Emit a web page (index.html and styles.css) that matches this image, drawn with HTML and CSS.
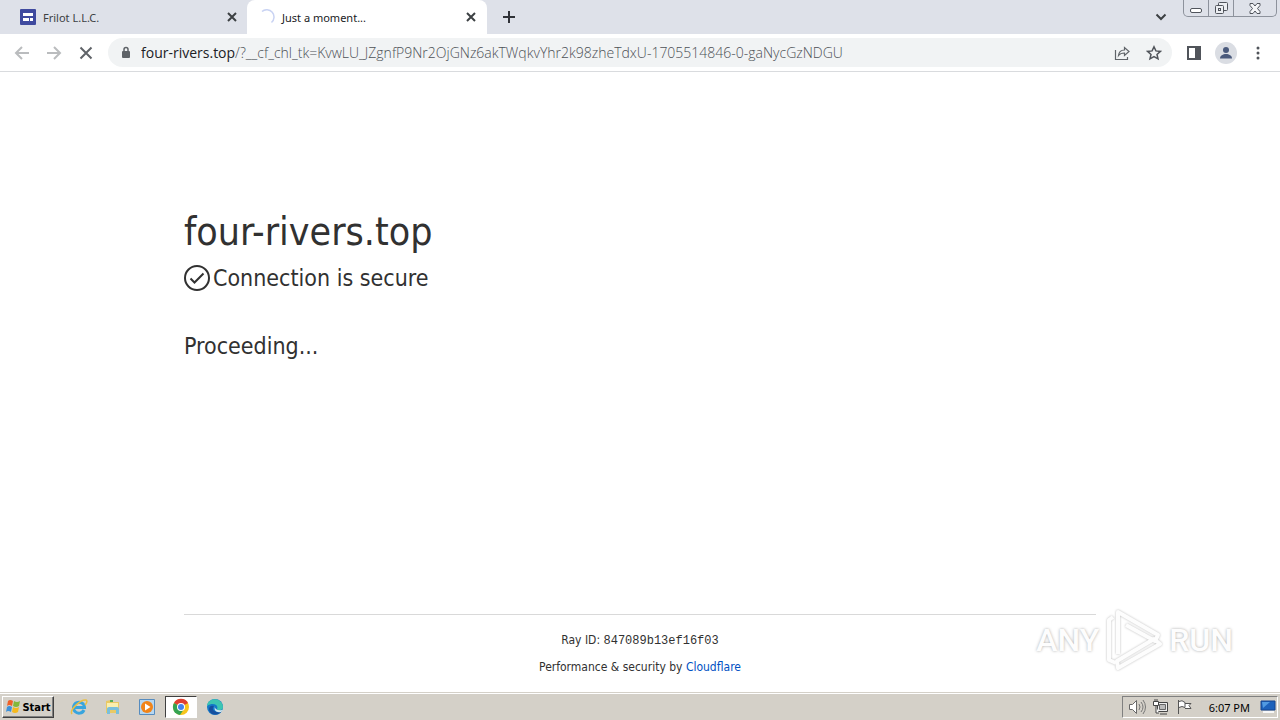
FILE: index.html
```html
<!DOCTYPE html>
<html lang="en">
<head>
<meta charset="utf-8">
<title>Just a moment...</title>
<link rel="stylesheet" href="styles.css">
</head>
<body>
<div class="desktop">
  <header class="tabstrip">
    <div class="tab">
      <svg class="tab-icon" viewBox="0 0 16 16"><rect width="16" height="16" rx="1" fill="#3f4a9f"/><path d="M3 4h10v3H3zM3 9h6v3H3zM10 9h3v3h-3z" fill="#fff"/></svg>
      <span class="tab-title">Frilot L.L.C.</span>
      <button class="tab-close" aria-label="Close tab"><svg width="10" height="10" viewBox="0 0 10 10"><path d="M1 1l8 8M9 1L1 9" stroke="#3c4043" stroke-width="2"/></svg></button>
    </div>
    <div class="tab tab-active">
      <svg class="tab-icon" viewBox="0 0 16 16"><path d="M3 2.500A7 7 0 1 1 12.500 13.500" fill="none" stroke="#c9d3f3" stroke-width="1.500"/></svg>
      <span class="tab-title">Just a moment...</span>
      <button class="tab-close" aria-label="Close tab"><svg width="10" height="10" viewBox="0 0 10 10"><path d="M1 1l8 8M9 1L1 9" stroke="#3c4043" stroke-width="2"/></svg></button>
    </div>
    <button class="new-tab" aria-label="New tab"><svg width="12" height="12" viewBox="0 0 12 12"><path d="M6 0v12M0 6h12" stroke="#303238" stroke-width="2"/></svg></button>
    <button class="tab-search" aria-label="Search tabs"><svg width="12" height="8" viewBox="0 0 12 8"><path d="M1.500 1.500L6 6l4.500-4.500" fill="none" stroke="#3c4043" stroke-width="2"/></svg></button>
    <div class="window-controls">
      <button class="win-button" aria-label="Minimize"><svg width="12" height="14" viewBox="0 0 12 14"><rect x=".5" y="7.500" width="11" height="4" rx="1.500" fill="#fff" stroke="#50545c"/></svg></button>
      <button class="win-button" aria-label="Restore"><svg width="14" height="14" viewBox="0 0 14 14"><g fill="#eceef2" stroke="#50545c"><rect x="4.500" y="1.500" width="9" height="8" rx="1"/><rect x="1.500" y="4.500" width="8" height="8" rx="1"/><rect x="4.500" y="7.500" width="2" height="2"/></g></svg></button>
      <button class="win-button win-close" aria-label="Close"><svg width="14" height="14" viewBox="0 0 14 14"><path d="M2 2.500h3l2 2.500 2-2.500h3v2L9.500 7.500 12 10.500v2H9L7 10l-2 2.500H2v-2l2.500-3L2 4.500z" fill="#f4f5f8" stroke="#50545c"/></svg></button>
    </div>
  </header>

  <nav class="toolbar">
    <button class="nav-button" aria-label="Back"><svg width="16" height="16" viewBox="0 0 16 16"><path d="M15 8H2M8 2L2 8l6 6" fill="none" stroke="#babcbe" stroke-width="2"/></svg></button>
    <button class="nav-button" aria-label="Forward"><svg width="16" height="16" viewBox="0 0 16 16"><path d="M1 8h13M8 2l6 6-6 6" fill="none" stroke="#babcbe" stroke-width="2"/></svg></button>
    <button class="nav-button" aria-label="Stop"><svg width="16" height="16" viewBox="0 0 16 16"><path d="M2.500 2.500l11 11M13.500 2.500l-11 11" stroke="#5f6368" stroke-width="2"/></svg></button>
    <div class="omnibox">
      <svg width="10" height="14" viewBox="0 0 10 14"><rect x="1" y="5" width="8" height="7" rx="1" fill="#5f6368"/><path d="M3 6V3.500a2 2 0 0 1 4 0V6" fill="none" stroke="#5f6368" stroke-width="1.500"/></svg>
      <div class="url"><span class="url-host">four-rivers.top</span>/?__cf_chl_tk=KvwLU_JZgnfP9Nr2OjGNz6akTWqkvYhr2k98zheTdxU-1705514846-0-gaNycGzNDGU</div>
      <button class="icon-button" aria-label="Share"><svg width="16" height="16" viewBox="0 0 16 16"><path d="M1.500 5v9.500h12V12M4.500 10.500c.4-3.500 2.500-5.500 6-5.500V2.500L15 6.500l-4.500 4V8c-2.500 0-4.500.5-6 2.500z" fill="none" stroke="#5f6368" stroke-width="1.200"/></svg></button>
      <button class="icon-button" aria-label="Bookmark"><svg width="16" height="16" viewBox="0 0 16 16"><path d="M8 1.800l1.900 4.100 4.500.5L11 9.400l1 4.400-4-2.300-4 2.300 1-4.400-3.400-3 4.500-.5z" fill="none" stroke="#50545a" stroke-width="1.500"/></svg></button>
    </div>
    <button class="nav-button" aria-label="Side panel"><svg width="14" height="14" viewBox="0 0 14 14"><path d="M1 1h12v12H1z" fill="none" stroke="#50545a" stroke-width="2"/><path d="M8 1h5v12H8z" fill="#50545a"/></svg></button>
    <button class="nav-button" aria-label="Profile"><svg width="22" height="22" viewBox="0 0 22 22"><circle cx="11" cy="11" r="11" fill="#dadde3"/><circle cx="11" cy="8" r="3" fill="#4a5a7c"/><path d="M5 16.500c0-6 12-6 12 0z" fill="#4a5a7c"/></svg></button>
    <button class="nav-button" aria-label="Menu"><svg width="4" height="14" viewBox="0 0 4 14"><g fill="#50545a"><circle cx="2" cy="2" r="1.500"/><circle cx="2" cy="7" r="1.500"/><circle cx="2" cy="12" r="1.500"/></g></svg></button>
  </nav>

  <div class="page">
    <main class="content">
      <h1 class="site">four-rivers.top</h1>
      <h2 class="status"><svg width="26" height="26" viewBox="0 0 26 26"><g fill="none" stroke="#313131" stroke-width="2"><circle cx="13" cy="13" r="12"/><path d="M6.500 13.500l4 4 9-9"/></g></svg>Connection is secure</h2>
      <p class="message">Proceeding...</p>
    </main>
    <footer class="footer">
      <div class="footer-inner">
        <div>Ray ID: <code class="ray">847089b13ef16f03</code></div>
        <div>Performance &amp; security by <a class="link" href="#">Cloudflare</a></div>
      </div>
    </footer>
    <div class="watermark">
      <span>ANY</span>
      <svg class="watermark-mark" width="60" height="64" viewBox="0 0 60 64"><g fill="none" stroke="#fdfdfd" stroke-width="4" stroke-linejoin="round"><path d="M9 9L5 12v40l7 3"/><path d="M14 46V4l40 23-3 6-29-16"/><path d="M13 53l37-22 6 5-42 24z"/></g></svg>
      <span>RUN</span>
    </div>
  </div>

  <footer class="taskbar">
    <button class="start"><svg width="16" height="16" viewBox="0 0 16 16"><path d="M3 2q2-2 5 0L7 7Q4 5 2 7z" fill="#ef6128"/><path d="M9 2q3 2 6 0l-1 5q-3 2-6 0z" fill="#83b83b"/><path d="M2 8q2-2 5 0l-1 5q-3-2-5 0z" fill="#3c91da"/><path d="M8 8q3 2 6 0l-1 5q-3 2-6 0z" fill="#f5b91e"/></svg>Start</button>
    <div class="launchers">
      <button class="launcher" aria-label="Internet Explorer"><svg width="18" height="18" viewBox="0 0 18 18"><path d="M14 12a5.500 5.500 0 1 1 .5-2.500H5" fill="none" stroke="#38a5de" stroke-width="3"/><path d="M2 16C-1 12 11 1 16 2c2 1 0 4-1 5" fill="none" stroke="#eabf43" stroke-width="1.500"/></svg></button>
      <button class="launcher" aria-label="File Explorer"><svg width="18" height="18" viewBox="0 0 18 18"><path d="M2 3l5-1 1 2h7v11H2z" fill="#e9c964"/><path d="M3 5h11v5H3z" fill="#faefae"/><path d="M3 16v-5q0-2 2-2h8q2 0 2 2v5h-3v-4H6v4z" fill="#79bfdc"/><path d="M6 3h3" stroke="#56ad59" stroke-width="2"/></svg></button>
      <button class="launcher" aria-label="Media Player"><svg width="18" height="18" viewBox="0 0 18 18"><path d="M1.500 1.500h15v15h-15z" fill="#b6d7f1" stroke="#568cbf"/><circle cx="9" cy="9" r="6" fill="#f18419"/><path d="M7 5.500v7L12.500 9z" fill="#fff"/></svg></button>
      <button class="launcher launcher-active" aria-label="Chrome"><svg width="18" height="18" viewBox="0 0 18 18"><circle cx="9" cy="9" r="8" fill="#f7c51c"/><path d="M9 9L2 5a8 8 0 0 1 14 0z" fill="#df3f32"/><path d="M9 9L2 5a8 8 0 0 0 6 12l4-6z" fill="#35a352"/><circle cx="9" cy="9" r="4" fill="#fff"/><circle cx="9" cy="9" r="3" fill="#4382ed"/></svg></button>
      <button class="launcher" aria-label="Edge"><svg width="18" height="18" viewBox="0 0 18 18"><circle cx="9" cy="9" r="8" fill="#1479c8"/><path d="M1 8c1-9 15-9 16 1 0 4-6 4-6 2 2-4-4-7-10-3z" fill="#3dc5b2"/><path d="M8 8c-3 3 0 7 7 6-5 5-12 2-12-3 0-3 3-4 5-3z" fill="#164f9f"/><path d="M9 8q-1 5 8 4l-2 2q-8 1-6-6z" fill="#d4e8ee"/></svg></button>
    </div>
    <div class="tray">
      <svg width="18" height="16" viewBox="0 0 18 16"><path d="M1.500 5.500h3l4-4v13l-4-4h-3z" fill="#fff" stroke="#686868"/><path d="M11 5q2 3 0 6M13 3q4 5 0 10M15 1q5 7 0 14" fill="none" stroke="#777"/></svg>
      <svg width="18" height="16" viewBox="0 0 18 16"><path d="M5.500 3.500h10v9h-10zM8 15h7" fill="#eee" stroke="#444"/><path d="M7.500 5.500h6v5h-6z" fill="#bbb" stroke="#666"/><path d="M1.500 2.500h5v4h-5zM4 7v7h3M3 0v2M5 0v2" fill="#fff" stroke="#444"/></svg>
      <svg width="18" height="16" viewBox="0 0 18 16"><path d="M2.500 1v14M3 2.500q3-2 6 1v5q-3-2-6 0M9 4.500h6l-2 2 2 3H9" fill="#fff" stroke="#555"/></svg>
      <time class="clock">6:07 PM</time>
      <svg width="16" height="16" viewBox="0 0 16 16"><path d="M1 2h14v9H1z" fill="#1d61bb" stroke="#17458e"/><path d="M2 3h8L3 9z" fill="#519ae2"/><path d="M3 13h11" stroke="#f7f7f7" stroke-width="2"/></svg>
    </div>
  </footer>
</div>
</body>
</html>
```
FILE: styles.css
```css
* { box-sizing: border-box; }
body { margin: 0; font-family: "Noto Sans", "Open Sans", sans-serif; font-size: 12px; color: #313131; }
button { margin: 0; padding: 0; border: 0; background: none; font: inherit; color: inherit; display: flex; align-items: center; justify-content: center; }
svg { display: block; flex: none; }

.desktop { height: 100vh; display: flex; flex-direction: column; background: #fff; }

.tabstrip { flex: none; height: 34px; display: flex; background: #dee1e9; }
.tab { width: 247px; display: flex; align-items: center; gap: 7px; padding: 0 10px 0 20px; font-size: 11px; color: #3c4043; }
.tab-active { width: 240px; padding: 0 11px 0 12px; background: #fff; border-radius: 8px 8px 0 0; color: #202124; }
.tab-icon { width: 16px; height: 16px; }
.tab-title { flex: 1; white-space: nowrap; }
.tab-close { width: 10px; height: 16px; }
.new-tab { width: 44px; }
.tab-search { width: 24px; margin-left: auto; }
.window-controls { height: 17px; margin: 0 3px 0 10px; display: flex; border: 1px solid #8d929c; border-top: 0; border-radius: 0 0 5px 5px; }
.win-button { width: 25px; border-right: 1px solid #8d929c; }
.win-close { width: 42px; border-right: 0; }

.toolbar { flex: none; height: 38px; display: flex; align-items: center; padding: 0 6px; border-bottom: 1px solid #d9dbde; }
.nav-button { width: 32px; height: 32px; }
.omnibox { flex: 1; min-width: 0; height: 29px; margin: 0 6px; padding: 0 10px 0 13px; display: flex; align-items: center; gap: 10px; border-radius: 15px; background: #f1f3f4; }
.url { flex: 1; min-width: 0; overflow: hidden; white-space: nowrap; font-family: "Open Sans", sans-serif; font-weight: 300; font-size: 14px; color: #4d5156; }
.url-host { font-weight: 400; color: #202124; }
.icon-button { width: 16px; height: 24px; margin-left: 6px; }

.page { flex: 1; min-height: 0; position: relative; display: flex; flex-direction: column; }
.content { flex: 1; width: 100%; max-width: 960px; margin: 0 auto; padding: 130px 24px 0; font-family: "DejaVu Sans Condensed", "DejaVu Sans", sans-serif; }
.site { margin: 0; font-size: 39px; line-height: 60px; font-weight: 400; }
.status { margin: 0; display: flex; align-items: center; gap: 3px; font-size: 23px; line-height: 32px; font-weight: 400; }
.message { margin: 36px 0 0; font-size: 23px; line-height: 32px; }
.footer { width: 100%; max-width: 960px; margin: 0 auto; padding: 0 24px; text-align: center; font-family: "DejaVu Sans Condensed", "DejaVu Sans", sans-serif; font-size: 12px; }
.footer-inner { padding: 15px 0 14px; border-top: 1px solid #d9d9d9; display: flex; flex-direction: column; gap: 6px; line-height: 21px; }
.ray { font-family: "Liberation Mono", monospace; font-size: 12px; line-height: 16px; }
.link { color: #0051c3; text-decoration: none; }
.watermark { position: absolute; right: 47px; bottom: 20px; display: flex; align-items: center; gap: 5px; font-family: "Roboto", sans-serif; font-size: 32px; font-weight: 500; color: #fdfdfd; text-shadow: 0 0 3px #aaa; }
.watermark-mark { filter: drop-shadow(0 0 1px #bbb); }

.taskbar { flex: none; height: 28px; padding: 2px 2px 1px; display: flex; align-items: center; background: #d4d0c8; border-top: 1px solid #d4d0c8; box-shadow: inset 0 1px #fff; }
.start { height: 22px; width: 52px; gap: 1px; border: 1px solid; border-color: #fff #404040 #404040 #fff; box-shadow: inset -1px -1px #808080; font-family: "DejaVu Sans Condensed", "Noto Sans", sans-serif; font-weight: 700; font-size: 11px; color: #000; }
.launchers { display: flex; margin-left: 9px; gap: 2px; }
.launcher { width: 32px; height: 22px; }
.launcher-active { background: #fff; border: 1px solid; border-color: #404040 #fff #fff #404040; }
.tray { height: 22px; margin-left: auto; padding: 0 1px 0 5px; display: flex; align-items: center; gap: 6px; border: 1px solid; border-color: #808080 #fff #fff #808080; color: #000; }
.clock { margin: 0 4px 0 9px; font-size: 11px; white-space: nowrap; }
```
